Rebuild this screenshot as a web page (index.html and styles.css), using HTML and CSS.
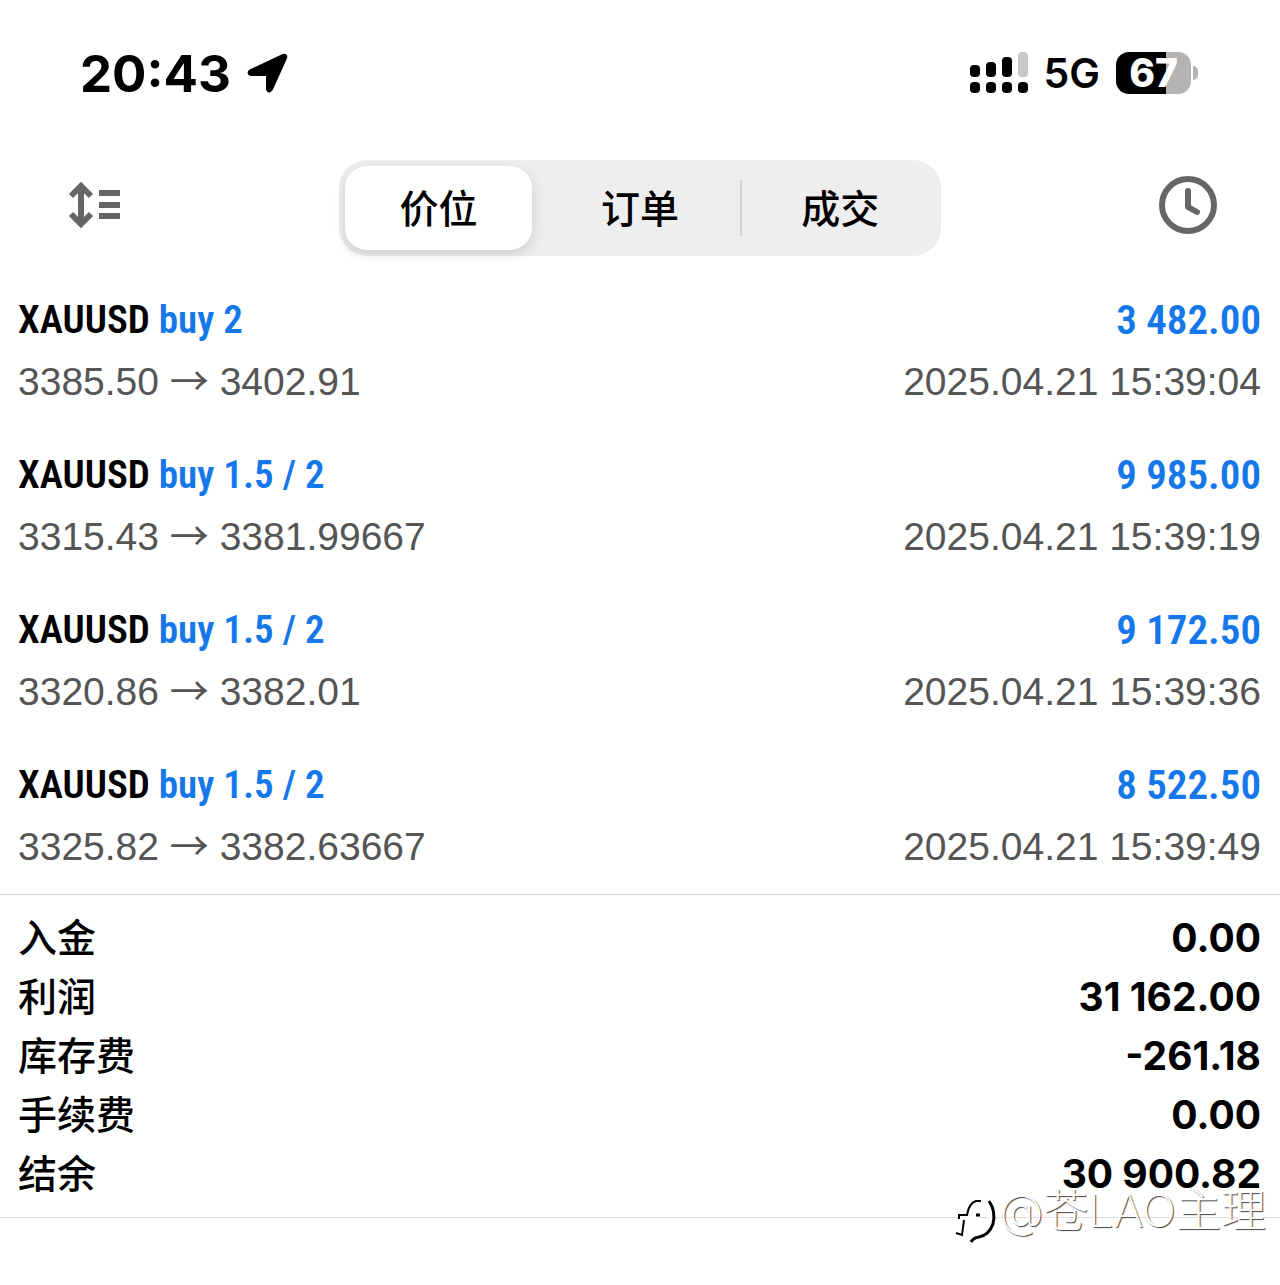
FILE: index.html
```html
<!DOCTYPE html>
<html lang="zh-CN">
<head>
    <meta charset="UTF-8">
    <meta name="viewport" content="width=device-width, initial-scale=1.0">
    <title>历史</title>
    <link rel="stylesheet" href="styles.css">
</head>
<body>
    <!-- Status bar -->
    <div class="status-bar">
        <div class="status-left">
            <span class="time">20:43</span>
            <svg class="location" viewBox="0 0 42 42" aria-hidden="true">
                <path d="M4 19 L36 4 Q39 3 38 6 L24 37 Q22 40 21 37 V22 H4 Q1 21 4 19 Z" fill="#000" stroke="#000" stroke-width="4" stroke-linejoin="round"/>
            </svg>
        </div>
        <div class="status-right">
            <svg class="signal" viewBox="0 0 58 42" aria-hidden="true">
                <rect x="0" y="13" width="10" height="12" rx="4"/>
                <rect x="16" y="10" width="10" height="15" rx="4"/>
                <rect x="32" y="5" width="10" height="20" rx="4"/>
                <rect x="48" y="0" width="10" height="25" rx="4" fill="#c8c8c8"/>
                <rect x="0" y="30" width="10" height="11" rx="4"/>
                <rect x="16" y="30" width="10" height="11" rx="4"/>
                <rect x="32" y="30" width="10" height="11" rx="4"/>
                <rect x="48" y="30" width="10" height="11" rx="4"/>
            </svg>
            <span class="network">5G</span>
            <span class="battery"><span class="battery-level">67</span></span>
        </div>
    </div>

    <!-- Toolbar -->
    <header class="toolbar">
        <button class="icon-button" aria-label="排序">
            <svg width="60" height="46" viewBox="-6 0 60 46" fill="none" stroke="#666" aria-hidden="true">
                <path d="M13 4 V42" stroke-width="6"/>
                <path d="M3 14 L13 4 L23 14 M3 32 L13 42 L23 32" stroke-width="6"/>
                <path d="M31 11 H52 M31 23 H52 M31 34 H52" stroke-width="6"/>
            </svg>
        </button>
        <div class="segmented">
            <button class="segment active">价位</button>
            <button class="segment">订单</button>
            <button class="segment divided">成交</button>
        </div>
        <button class="icon-button" aria-label="时间">
            <svg width="60" height="60" viewBox="0 0 60 60" fill="none" stroke="#666" aria-hidden="true">
                <circle cx="30" cy="30" r="26" stroke-width="6"/>
                <path d="M30 16 V32 L39 37" stroke-width="6" stroke-linecap="round" stroke-linejoin="round"/>
            </svg>
        </button>
    </header>

    <main>
        <!-- Deals -->
        <ul class="deals">
            <li class="deal">
                <div class="row title"><span>XAUUSD <span class="blue">buy 2</span></span><span class="blue amount">3 482.00</span></div>
                <div class="row detail"><span>3385.50 <span class="arrow">→</span> 3402.91</span><time>2025.04.21 15:39:04</time></div>
            </li>
            <li class="deal">
                <div class="row title"><span>XAUUSD <span class="blue">buy 1.5 / 2</span></span><span class="blue amount">9 985.00</span></div>
                <div class="row detail"><span>3315.43 <span class="arrow">→</span> 3381.99667</span><time>2025.04.21 15:39:19</time></div>
            </li>
            <li class="deal">
                <div class="row title"><span>XAUUSD <span class="blue">buy 1.5 / 2</span></span><span class="blue amount">9 172.50</span></div>
                <div class="row detail"><span>3320.86 <span class="arrow">→</span> 3382.01</span><time>2025.04.21 15:39:36</time></div>
            </li>
            <li class="deal">
                <div class="row title"><span>XAUUSD <span class="blue">buy 1.5 / 2</span></span><span class="blue amount">8 522.50</span></div>
                <div class="row detail"><span>3325.82 <span class="arrow">→</span> 3382.63667</span><time>2025.04.21 15:39:49</time></div>
            </li>
        </ul>

        <!-- Totals -->
        <dl class="totals">
            <div class="row"><dt>入金</dt><dd>0.00</dd></div>
            <div class="row"><dt>利润</dt><dd>31 162.00</dd></div>
            <div class="row"><dt>库存费</dt><dd>-261.18</dd></div>
            <div class="row"><dt>手续费</dt><dd>0.00</dd></div>
            <div class="row"><dt>结余</dt><dd>30 900.82</dd></div>
        </dl>
    </main>

    <!-- Watermark -->
    <div class="watermark">
        <svg width="44" height="50" viewBox="0 0 44 50" fill="none" aria-hidden="true">
            <g stroke="#fff" stroke-width="6">
                <path d="M28 7 Q15 6 12 20 L6 40"/>
                <path d="M5 23 H24"/>
                <path d="M33 5 Q37 15 34 27 Q31 38 15 43"/>
            </g>
            <g stroke="#000" stroke-width="2">
                <path d="M26 6 H21 Q14 8 12 20 H4 V24"/>
                <path d="M21 20 H25" stroke-width="3"/>
                <path d="M9 25 L7 40 L1 38"/>
                <path d="M34 6 Q41 16 38 29 Q34 40 24 42 Q18 43 16 47" stroke-width="3"/>
            </g>
        </svg>
        <span>@苍LAO主理</span>
    </div>
</body>
</html>
```

FILE: styles.css
```css
* {
    box-sizing: border-box;
}

body {
    position: relative;
    min-height: 100vh;
    margin: 0;
    background-color: #fff;
    color: #000;
    font-family: Inter, "Noto Sans CJK SC", sans-serif;
}

button {
    border: none;
    padding: 0;
    background: none;
    color: inherit;
    font-family: inherit;
    cursor: pointer;
}

/* Status bar */
.status-bar {
    display: flex;
    justify-content: space-between;
    align-items: center;
    height: 146px;
    padding: 0 82px 0 80px;
}

.status-left,
.status-right {
    display: flex;
    align-items: center;
    gap: 16px;
}

.time {
    font-size: 51px;
    font-weight: 700;
}

.location {
    width: 42px;
    height: 42px;
}

.signal {
    width: 58px;
    height: 42px;
}

.network {
    font-size: 41px;
    font-weight: 600;
}

.battery {
    display: flex;
    align-items: center;
    gap: 2px;
}

.battery-level {
    width: 75px;
    border-radius: 13px;
    background: linear-gradient(to right, #000 67%, #b4b4b4 67%);
    color: #fff;
    font-size: 39px;
    font-weight: 800;
    line-height: 42px;
    text-align: center;
}

.battery::after {
    content: "";
    width: 5px;
    height: 14px;
    border-radius: 0 5px 5px 0;
    background-color: #b4b4b4;
}

/* Toolbar */
.toolbar {
    display: flex;
    justify-content: space-between;
    align-items: center;
    padding: 14px 62px 0;
}

.icon-button {
    display: flex;
    width: 60px;
    margin-bottom: 7px;
}

.segmented {
    display: grid;
    grid-template-columns: repeat(3, 1fr);
    width: 52%;
    height: 96px;
    border-radius: 28px;
    background-color: #eee;
}

.segment {
    padding-bottom: 4px;
    font-size: 39px;
    font-weight: 500;
}

.segment.active {
    margin: 6px 8px 6px 6px;
    border-radius: 22px;
    background-color: #fff;
    box-shadow: 0 4px 12px rgba(0, 0, 0, 0.15);
}

.segment.divided {
    background: linear-gradient(#d2d2d2, #d2d2d2) left center / 2px 56px no-repeat;
}

/* Rows */
.row {
    display: flex;
    justify-content: space-between;
    padding: 0 19px 0 18px;
}

.deals {
    display: flex;
    flex-direction: column;
    gap: 31px;
    margin: 0;
    padding: 33px 0 16px;
    list-style: none;
}

.title {
    font-family: "Roboto Condensed", "Noto Sans CJK SC", sans-serif;
    font-size: 39px;
    font-weight: 600;
    line-height: 62px;
}

.blue {
    color: #1478eb;
}

.amount {
    font-size: 41px;
}

.detail {
    color: #555;
    font-family: "Liberation Sans", sans-serif;
    font-size: 39px;
    line-height: 62px;
}

.arrow {
    font-family: "Noto Sans CJK SC", sans-serif;
    line-height: 1;
}

/* Totals */
.totals {
    margin: 0;
    padding: 13px 0 14px;
    border-top: 1px solid #ccc;
    border-bottom: 1px solid #ddd;
    font-size: 39px;
    line-height: 59px;
}

.totals dt {
    font-weight: 500;
}

.totals dd {
    margin: 0;
    font-weight: 700;
}

.watermark {
    position: absolute;
    right: 14px;
    bottom: 40px;
    display: flex;
    align-items: flex-end;
    color: #fff;
    font-family: Inter, "Noto Sans CJK SC", sans-serif;
    font-size: 45px;
    font-weight: 200;
    line-height: 68px;
    text-shadow: 1px 1px 1px #444;
}
```
